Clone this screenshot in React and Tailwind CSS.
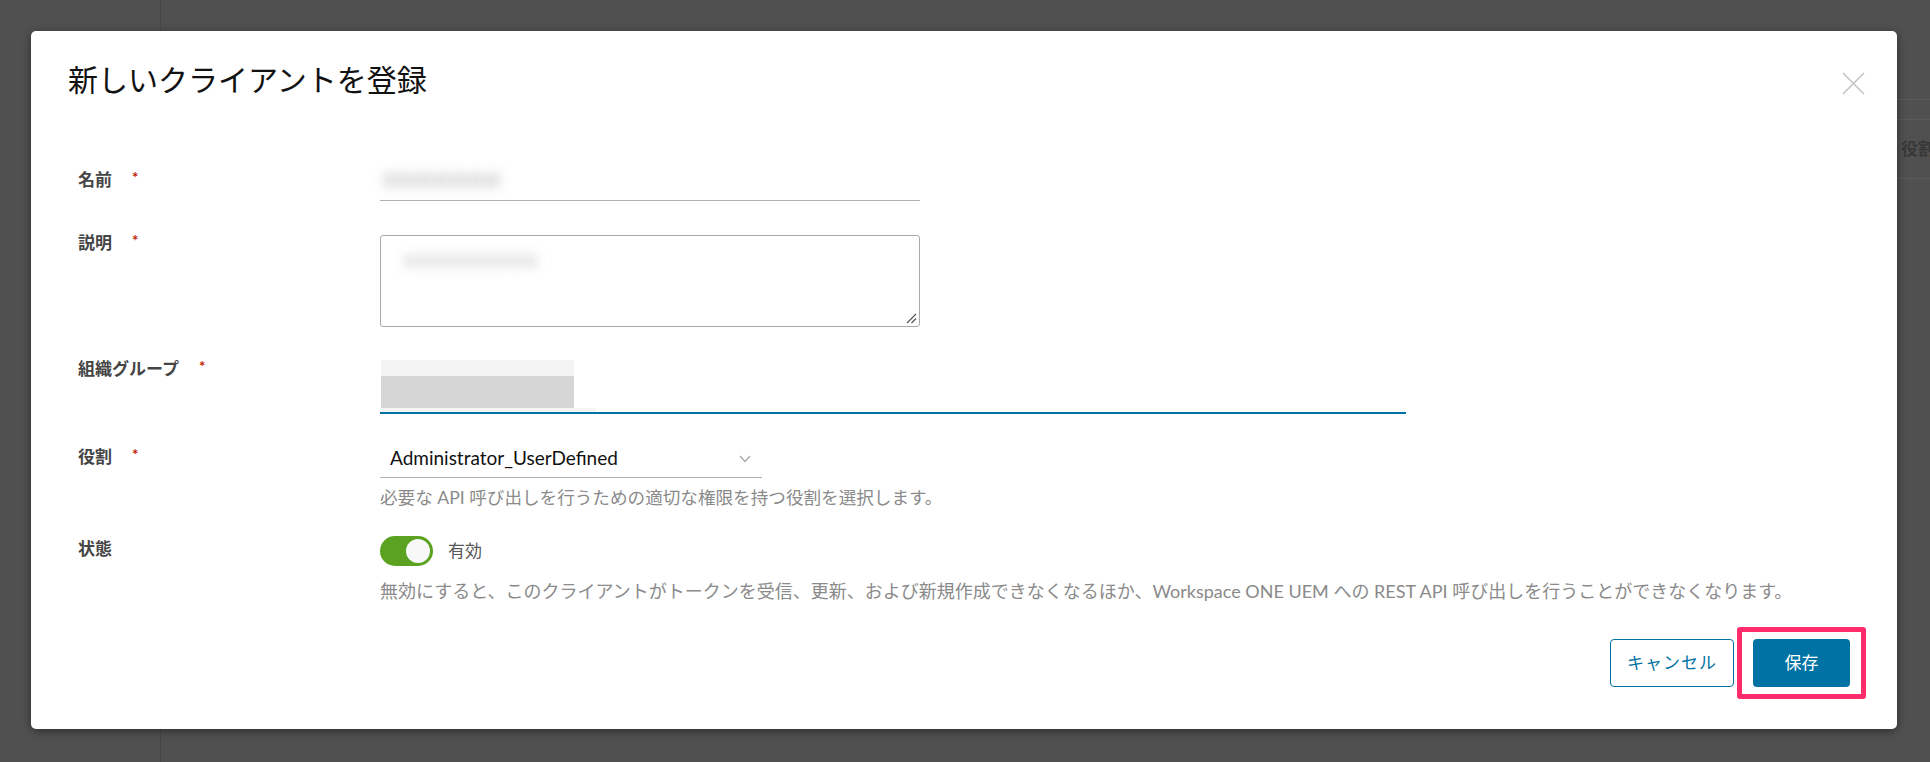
import { useState } from "react";

const FONT = "font-['Lato','Noto_Sans_CJK_JP',sans-serif]";

function Required() {
  return <span className="ml-[20px] text-[15px] leading-none text-[#c21d00] relative -top-[3px]">*</span>;
}

function Label({ children, required, className = "" }) {
  return (
    <div className={`w-[302px] h-[24px] shrink-0 flex items-center text-[17px] leading-[24px] font-bold text-[#454545] ${className}`}>
      <span>{children}</span>
      {required && <Required />}
    </div>
  );
}

function CloseIcon() {
  return (
    <svg width="23" height="23" viewBox="0 0 23 23" fill="none" stroke="#c4c4c4" strokeWidth="1.6">
      <path d="M1 1 L22 22 M22 1 L1 22" />
    </svg>
  );
}

function Chevron() {
  return (
    <svg width="12" height="8" viewBox="0 0 12 8" fill="none" stroke="#a8a8a8" strokeWidth="1.3">
      <path d="M1 1 L6 6.5 L11 1" />
    </svg>
  );
}

function Toggle({ on, onChange }) {
  return (
    <button
      onClick={() => onChange(!on)}
      className={`w-[53px] h-[30px] rounded-full flex items-center px-[3px] ${on ? "bg-[#5aa220] justify-end" : "bg-[#b3b3b3] justify-start"}`}
    >
      <span className="w-[24px] h-[24px] rounded-full bg-[#f8f8f8]" />
    </button>
  );
}

export default function App() {
  const [enabled, setEnabled] = useState(true);

  return (
    <div className={`relative w-[1930px] h-[762px] overflow-hidden bg-[#505050] flex ${FONT}`}>
      {/* dimmed page behind the dialog */}
      <div className="w-[161px] h-full border-r border-[#474747]" />
      <div className="flex-1 flex flex-col pt-[99px]">
        <div className="h-[20px] border-t border-[#5a5a5a]" />
        <div className="h-[60px] border-t border-b border-[#5a5a5a] flex items-center justify-end">
          <div className="w-[29px] overflow-hidden whitespace-nowrap text-[17px] font-bold text-[#383838]">役割</div>
        </div>
      </div>

      {/* dialog */}
      <div className="absolute left-[31px] top-[31px] w-[1866px] h-[698px] bg-white rounded-[5px] shadow-[0_2px_8px_rgba(0,0,0,0.45)] flex flex-col">
        <div className="flex items-start justify-between pl-[37px] pr-[32px] pt-[30px]">
          <h2 className="text-[30px] leading-[36px] text-[#111] font-normal">新しいクライアントを登録</h2>
          <button className="mt-[11px]"><CloseIcon /></button>
        </div>

        <div className="flex flex-col pl-[47px] pr-[47px] mt-[64px]">
          {/* 名前 */}
          <div className="flex items-start">
            <Label required className="mt-[7px]">名前</Label>
            <div className="w-[540px] h-[40px] border-b border-[#b0b0b0] flex items-center">
              <span className="ml-[2px] text-[17px] text-[#dadada] blur-[6px]">■■■■■■■</span>
            </div>
          </div>

          {/* 説明 */}
          <div className="flex items-start mt-[30px]">
            <Label required>説明</Label>
            <div className="mt-[4px] w-[540px] h-[92px] border border-[#a9a9a9] rounded-[3px] relative">
              <div className="mt-[14px] ml-[22px] text-[15px] text-[#e0e0e0] blur-[6px]">■■■■■■■■■</div>
              <svg className="absolute right-[2px] bottom-[2px]" width="11" height="11" viewBox="0 0 11 11" stroke="#555" strokeWidth="1.2">
                <path d="M1 10 L10 1 M5.5 10 L10 5.5" />
              </svg>
            </div>
          </div>

          {/* 組織グループ */}
          <div className="flex items-start mt-[30px]">
            <Label required>組織グループ</Label>
            <div className="mt-[3px] w-[1026px] flex flex-col">
              <div className="w-[193px] h-[16px] bg-[#f4f4f4] ml-[1px]" />
              <div className="w-[193px] h-[32px] bg-[#d6d6d6] ml-[1px]" />
              <div className="h-[4px] w-[216px] bg-[#f4f4f4]" />
              <div className="h-[2px] bg-[#0072a3]" />
            </div>
          </div>

          {/* 役割 */}
          <div className="flex items-start mt-[26px]">
            <Label required className="mt-[5px]">役割</Label>
            <div className="flex flex-col">
              <div className="w-[382px] h-[38px] border-b border-[#b0b0b0] flex items-center justify-between pl-[10px] pr-[11px]">
                <span className="text-[19px] text-[#111]">Administrator_UserDefined</span>
                <Chevron />
              </div>
              <p className="mt-[9px] text-[17.6px] leading-[22px] text-[#8a8a8a] whitespace-nowrap">必要な API 呼び出しを行うための適切な権限を持つ役割を選択します。</p>
            </div>
          </div>

          {/* 状態 */}
          <div className="flex items-start mt-[27px]">
            <Label className="mt-[1px]">状態</Label>
            <div className="flex flex-col">
              <div className="flex items-center gap-[15px]">
                <Toggle on={enabled} onChange={setEnabled} />
                <span className="text-[17px] text-[#565656]">有効</span>
              </div>
              <p className="mt-[14px] text-[18px] leading-[22px] text-[#8a8a8a] whitespace-nowrap">
                無効にすると、このクライアントがトークンを受信、更新、および新規作成できなくなるほか、Workspace ONE UEM への REST API 呼び出しを行うことができなくなります。
              </p>
            </div>
          </div>

          {/* actions */}
          <div className="flex justify-end gap-[19px] mt-[37px]">
            <button className="w-[124px] h-[48px] border border-[#0072a3] rounded-[4px] text-[17px] text-[#0072a3] tracking-[1px]">キャンセル</button>
            <div className="relative">
              <button className="w-[97px] h-[48px] bg-[#0072a3] rounded-[4px] text-[17px] text-white">保存</button>
              <div className="absolute -left-[16px] -right-[16px] -top-[12px] -bottom-[12px] border-[5px] border-[#ff2c6c] rounded-[3px] pointer-events-none" />
            </div>
          </div>
        </div>
      </div>
    </div>
  );
}
